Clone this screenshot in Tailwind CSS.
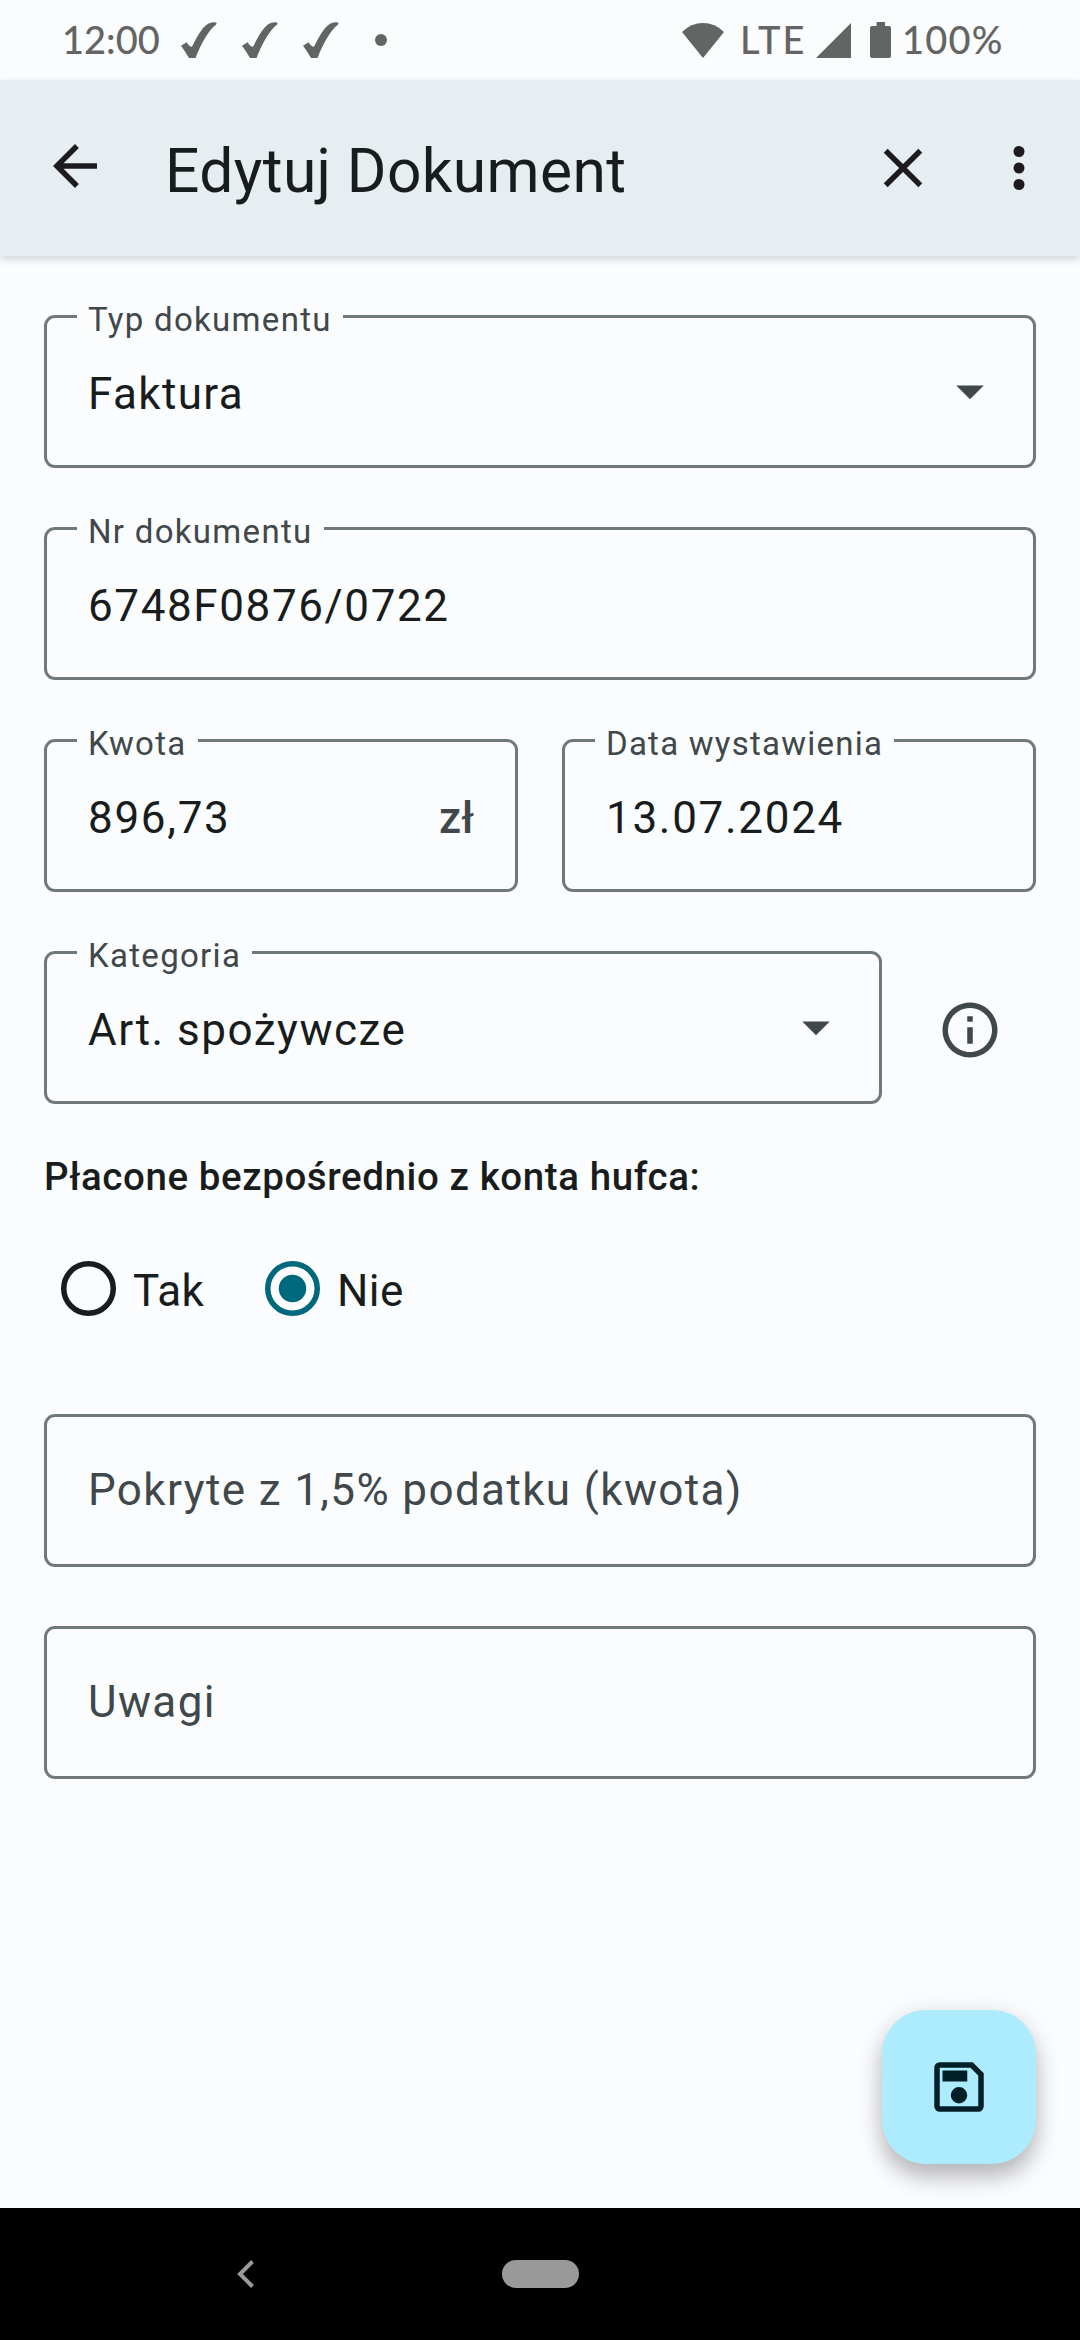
<!DOCTYPE html>
<html lang="pl">
<head>
<meta charset="utf-8">
<title>Edytuj Dokument</title>
<script src="https://cdn.jsdelivr.net/npm/@tailwindcss/browser@4"></script>
</head>
<body class="bg-[#fbfcfe] font-['Roboto',sans-serif] text-[#191c1d]">
<svg class="hidden">
  <symbol id="check" viewBox="0 0 36 36"><path d="M0 23.700 5.700 20.300Q8 24.700 11 24.800C15 17 20 6 27 1.700Q31-.6 35 .6 36.300 1.500 34.500 3C27 9 20 22 14.500 36H8Q4 29 0 23.700Z"/></symbol>
  <symbol id="drop" viewBox="0 0 24 24"><path d="m7 10 5 5 5-5z"/></symbol>
</svg>
<div class="flex h-[2340px] w-[1080px] flex-col overflow-hidden">

  <!-- status bar -->
  <div class="flex h-20 shrink-0 items-center fill-[#636564] pl-[62px] pr-[77px] font-['Lato',sans-serif] text-[38px] font-medium leading-[46px] text-[#636564]">
    <span class="-mt-0.5 w-[119px]">12:00</span>
    <div class="flex gap-[25px]">
      <svg class="size-9"><use href="#check"/></svg>
      <svg class="size-9"><use href="#check"/></svg>
      <svg class="size-9"><use href="#check"/></svg>
    </div>
    <i class="ml-9 size-3 rounded-full bg-[#636564]"></i>
    <svg class="ml-auto h-[35px] w-[42px]" viewBox="0 0 42 35"><path d="M0 9Q9 0 21 0T42 9L21 35Z"/></svg>
    <span class="-mt-0.5 ml-[16px] w-[69px] tracking-[2px]">LTE</span>
    <svg class="ml-[7px] size-[35px]" viewBox="0 0 35 35"><path d="M35 0V35H0Z"/></svg>
    <svg class="ml-[19px] h-9 w-[21px]" viewBox="0 0 21 36"><path d="M6.500 0h8.500v4H19a2 2 0 0 1 2 2V34a2 2 0 0 1-2 2H2a2 2 0 0 1-2-2V6a2 2 0 0 1 2-2H6.500Z"/></svg>
    <span class="-mt-0.5 ml-[11px] w-[101px] tracking-[1.2px]">100%</span>
  </div>

  <!-- app bar -->
  <header class="flex h-44 shrink-0 items-center bg-[#e6eef1] fill-[#1d1b20] pl-[42px] pr-7 shadow-[0_3px_8px_rgba(0,0,0,0.16)]">
    <svg class="-mt-1 size-[66px]" viewBox="0 0 24 24"><path d="M20 11H7.830l5.590-5.590L12 4l-8 8 8 8 1.410-1.410L7.830 13H20z"/></svg>
    <h1 class="ml-[57px] mt-[7px] text-[60.5px] leading-[72px] tracking-[0.38px]">Edytuj Dokument</h1>
    <svg class="ml-auto size-[66px]" viewBox="0 0 24 24"><path d="M19 6.410 17.590 5 12 10.590 6.410 5 5 6.410 10.590 12 5 17.590 6.410 19 12 13.410 17.590 19 19 17.590 13.410 12z"/></svg>
    <svg class="ml-[50px] size-[66px]" viewBox="0 0 24 24"><circle cx="12" cy="6" r="2"/><circle cx="12" cy="12" r="2"/><circle cx="12" cy="18" r="2"/></svg>
  </header>

  <!-- form -->
  <main class="flex flex-col gap-[59px] px-11 pt-[59px] text-[44px] leading-[52px] tracking-[1.38px]">
    <div class="relative flex h-[153px] rounded-[11px] border-3 border-[#6f797c] pl-[41px] pr-[30px] pt-[50px]">
      <label class="absolute -top-[17px] left-[30px] bg-[#fbfcfe] px-[11px] text-[33px] leading-[38px] tracking-[1.3px] text-[#40484b]">Typ dokumentu</label>
      <span>Faktura</span>
      <svg class="-mt-[10px] ml-auto size-[66px] fill-[#40484b]"><use href="#drop"/></svg>
    </div>

    <div class="relative flex h-[153px] rounded-[11px] border-3 border-[#6f797c] pl-[41px] pt-[50px]">
      <label class="absolute -top-[17px] left-[30px] bg-[#fbfcfe] px-[11px] text-[33px] leading-[38px] tracking-[1.3px] text-[#40484b]">Nr dokumentu</label>
      <span class="tracking-[1.6px]">6748F0876/0722</span>
    </div>

    <div class="grid grid-cols-2 gap-11">
      <div class="relative flex h-[153px] justify-between rounded-[11px] border-3 border-[#6f797c] pl-[41px] pr-[41px] pt-[50px]">
        <label class="absolute -top-[17px] left-[30px] bg-[#fbfcfe] px-[11px] text-[33px] leading-[38px] tracking-[1.3px] text-[#40484b]">Kwota</label>
        <span class="tracking-[1.7px]">896,73</span>
        <span class="font-medium tracking-normal text-[#40484b]">zł</span>
      </div>
      <div class="relative flex h-[153px] rounded-[11px] border-3 border-[#6f797c] pl-[41px] pt-[50px]">
        <label class="absolute -top-[17px] left-[30px] bg-[#fbfcfe] px-[11px] text-[33px] leading-[38px] tracking-[1.25px] text-[#40484b]">Data wystawienia</label>
        <span class="tracking-[1.7px]">13.07.2024</span>
      </div>
    </div>

    <div class="flex items-center">
      <div class="relative flex h-[153px] w-[838px] rounded-[11px] border-3 border-[#6f797c] pl-[41px] pr-[30px] pt-[50px]">
        <label class="absolute -top-[17px] left-[30px] bg-[#fbfcfe] px-[11px] text-[33px] leading-[38px] tracking-[1.3px] text-[#40484b]">Kategoria</label>
        <span class="tracking-[1.5px]">Art. spożywcze</span>
        <svg class="-mt-[10px] ml-auto size-[66px] fill-[#40484b]"><use href="#drop"/></svg>
      </div>
      <svg class="ml-[55px] mt-1 size-[66px] fill-[#40484b]" viewBox="0 0 24 24"><path d="M11 7h2v2h-2zm0 4h2v6h-2zm1-9C6.480 2 2 6.480 2 12s4.480 10 10 10 10-4.480 10-10S17.520 2 12 2zm0 18c-4.410 0-8-3.590-8-8s3.590-8 8-8 8 3.590 8 8-3.590 8-8 8z"/></svg>
    </div>

    <section class="-mt-[9px] flex flex-col">
      <p class="text-[38.5px] font-medium leading-[46px] tracking-[0.59px]">Płacone bezpośrednio z konta hufca:</p>
      <div class="mt-[61px] flex h-[55px] items-center pl-[17px] tracking-[0.4px]">
        <svg class="size-[55px]" viewBox="0 0 20 20"><circle cx="10" cy="10" r="9" fill="none" stroke="#191c1d" stroke-width="2"/></svg>
        <span class="ml-[17px] mt-1 w-[132px]">Tak</span>
        <svg class="size-[55px]" viewBox="0 0 20 20"><circle cx="10" cy="10" r="9" fill="none" stroke="#00687c" stroke-width="2"/><circle cx="10" cy="10" r="5" fill="#00687c"/></svg>
        <span class="ml-[17px] mt-1">Nie</span>
      </div>
    </section>

    <div class="mt-[39px] flex h-[153px] rounded-[11px] border-3 border-[#6f797c] pl-[41px] pt-[47px] text-[#40484b]">Pokryte z 1,5% podatku (kwota)</div>
    <div class="flex h-[153px] rounded-[11px] border-3 border-[#6f797c] pl-[41px] pt-[47px] text-[#40484b]">Uwagi</div>
  </main>

  <!-- save button -->
  <button class="mb-11 mr-11 mt-auto flex size-[154px] shrink-0 items-center justify-center self-end rounded-[44px] bg-[#adecff] shadow-[0_14px_22px_rgba(0,0,0,0.24),0_2px_28px_rgba(0,0,0,0.08)]">
    <svg class="size-[66px] fill-[#001f26]" viewBox="0 0 24 24"><path d="M17 3H5a2 2 0 0 0-2 2v14a2 2 0 0 0 2 2h14a2 2 0 0 0 2-2V7zm2 16H5V5h11.170L19 7.830zM12 12a3 3 0 1 0 0 6 3 3 0 0 0 0-6zM6 6h9v4H6z"/></svg>
  </button>

  <!-- system navigation -->
  <nav class="flex h-[132px] shrink-0 items-center bg-black pl-[237px]">
    <svg class="h-7 w-[17px]" viewBox="0 0 17 28"><path d="M15.500 1.500 3 14 15.500 26.500" fill="none" stroke="#999" stroke-width="4"/></svg>
    <span class="ml-[248px] h-7 w-[77px] rounded-full bg-[#999]"></span>
  </nav>
</div>
</body>
</html>
